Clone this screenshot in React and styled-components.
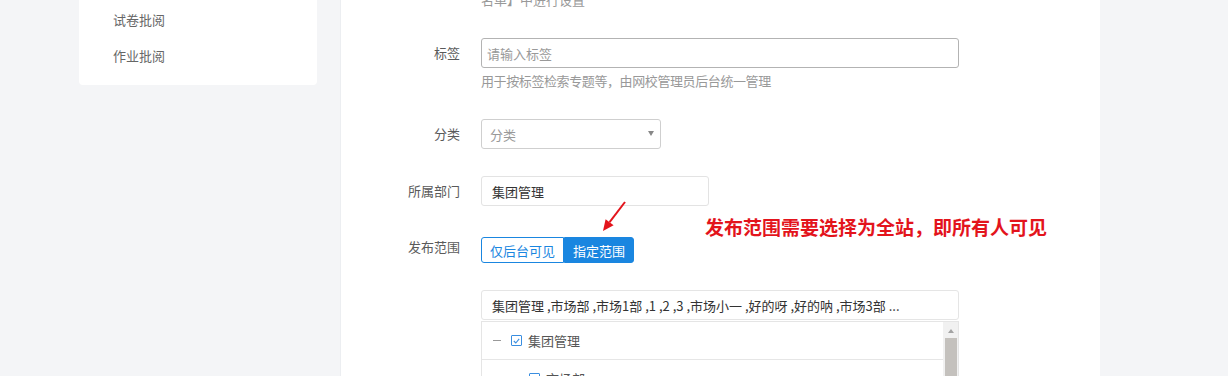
import React from "react";
import styled, { createGlobalStyle } from "styled-components";

const GlobalStyle = createGlobalStyle`
  html, body {
    margin: 0;
    padding: 0;
    background: #f4f5f7;
    overflow: hidden;
    font-family: "Noto Sans CJK SC", "Noto Sans", sans-serif;
  }
  * { box-sizing: border-box; }
`;

const Page = styled.div`
  display: flex;
  align-items: flex-start;
  gap: 23px;
  margin-top: -20px;
  padding-left: 79px;
`;

const Sidebar = styled.nav`
  width: 238px;
  background: #fff;
  border-radius: 4px;
  padding: 22px 0 11px;
`;

const NavItem = styled.div`
  padding-left: 34px;
  line-height: 36px;
  font-size: 13px;
  color: #666;
`;

const Panel = styled.main`
  width: 760px;
  min-height: 520px;
  background: #fff;
  padding-top: 10px;
  border-left: 1px solid #eceef1;
`;

const Row = styled.div`
  display: grid;
  grid-template-columns: 119px 1fr;
  column-gap: 21px;
  align-items: start;
  margin-top: ${(p) => p.$mt || 0}px;
  position: relative;
`;

const Label = styled.div`
  text-align: right;
  font-size: 13px;
  color: #5a5a5a;
  line-height: ${(p) => p.$lh || 30}px;
`;

const Field = styled.div`
  position: relative;
  display: flex;
  flex-direction: column;
  align-items: flex-start;
`;

const Help = styled.div`
  font-size: 13px;
  line-height: 20px;
  color: #999;
  letter-spacing: ${(p) => p.$ls || 0}px;
  margin-top: ${(p) => p.$mt || 0}px;
`;

const TextBox = styled.div`
  width: ${(p) => p.$w}px;
  height: 30px;
  border: 1px solid ${(p) => p.$border || "#e0e0e0"};
  border-radius: 3px;
  padding-left: ${(p) => p.$pl || 10}px;
  display: flex;
  align-items: center;
  font-size: 13px;
  color: ${(p) => (p.$placeholder ? "#999" : "#333")};
  background: #fff;
  position: relative;
  white-space: nowrap;
  overflow: hidden;
`;

const Caret = styled.span`
  position: absolute;
  right: 6px;
  top: 11px;
  width: 0;
  height: 0;
  border-left: 3px solid transparent;
  border-right: 3px solid transparent;
  border-top: 5px solid #888;
`;

const ButtonGroup = styled.div`
  display: flex;
`;

const SegButton = styled.button`
  height: 26px;
  padding: 0 8px;
  font-family: inherit;
  font-size: 13px;
  border: 1px solid #1a86e0;
  background: ${(p) => (p.$active ? "#1a86e0" : "#fff")};
  color: ${(p) => (p.$active ? "#fff" : "#1a86e0")};
  border-radius: ${(p) => (p.$first ? "3px 0 0 3px" : "0 3px 3px 0")};
  cursor: pointer;
`;

const Annotation = styled.div`
  position: absolute;
  left: 224px;
  top: -22px;
  font-size: 19px;
  line-height: 24px;
  font-weight: 700;
  color: #e3141c;
  white-space: nowrap;
`;

const ArrowSvg = styled.svg`
  position: absolute;
  left: 118px;
  top: -36px;
`;

const Dropdown = styled.div`
  width: 478px;
  height: 200px;
  margin-top: 1px;
  border: 1px solid #e5e5e5;
  display: flex;
`;

const TreeList = styled.div`
  flex: 1;
`;

const TreeRow = styled.div`
  height: 38px;
  border-bottom: 1px solid #e6e6e6;
  display: flex;
  align-items: center;
  padding-left: ${(p) => 11 + p.$depth * 18}px;
  font-size: 13px;
  color: #555;
`;

const Toggle = styled.span`
  width: 8px;
  height: 1px;
  background: #999;
  margin-right: 10px;
`;

const Check = styled.span`
  width: 11px;
  height: 11px;
  border: 1px solid #3a8ee0;
  border-radius: 1px;
  margin-right: 6px;
  display: flex;
  align-items: center;
  justify-content: center;
`;

const ScrollTrack = styled.div`
  width: 15px;
  background: #f1f1f1;
  display: flex;
  flex-direction: column;
  align-items: center;
`;

const ScrollArrow = styled.span`
  margin-top: 7px;
  width: 0;
  height: 0;
  border-left: 3px solid transparent;
  border-right: 3px solid transparent;
  border-bottom: 4px solid #a3a3a3;
`;

const ScrollThumb = styled.div`
  margin-top: 5px;
  width: 12px;
  height: 140px;
  background: #c4c1bd;
`;

const CheckMark = () => (
  <svg width="7" height="6" viewBox="0 0 7 6">
    <path d="M0.8 3 L2.8 5 L6.2 0.8" fill="none" stroke="#3a8ee0" strokeWidth="1.1" />
  </svg>
);

export default function App() {
  return (
    <>
      <GlobalStyle />
      <Page>
        <Sidebar>
          <NavItem>试卷批阅</NavItem>
          <NavItem>作业批阅</NavItem>
        </Sidebar>
        <Panel>
          <Row>
            <div />
            <Field>
              <Help>名单】中进行设置</Help>
            </Field>
          </Row>

          <Row $mt={28}>
            <Label>标签</Label>
            <Field>
              <TextBox $w={478} $border="#b3b3b3" $pl={5} $placeholder>
                请输入标签
              </TextBox>
              <Help $mt={3} $ls={-0.4}>用于按标签检索专题等，由网校管理员后台统一管理</Help>
            </Field>
          </Row>

          <Row $mt={28}>
            <Label>分类</Label>
            <Field>
              <TextBox $w={180} $border="#cfcfcf" $pl={8} $placeholder>
                分类
                <Caret />
              </TextBox>
            </Field>
          </Row>

          <Row $mt={27}>
            <Label>所属部门</Label>
            <Field>
              <TextBox $w={228} $border="#e3e3e3">
                集团管理
              </TextBox>
            </Field>
          </Row>

          <Row $mt={31}>
            <Label $lh={20}>发布范围</Label>
            <Field>
              <ButtonGroup>
                <SegButton $first>仅后台可见</SegButton>
                <SegButton $active>指定范围</SegButton>
              </ButtonGroup>
              <ArrowSvg width="32" height="34" viewBox="0 0 32 34">
                <line x1="26" y1="1" x2="10.6" y2="21.2" stroke="#e3141c" strokeWidth="2" />
                <polygon points="4,30 14.6,24.2 6.6,18.2" fill="#e3141c" />
              </ArrowSvg>
              <Annotation>发布范围需要选择为全站，即所有人可见</Annotation>
            </Field>
          </Row>

          <Row $mt={27}>
            <div />
            <Field>
              <TextBox $w={478} $border="#e5e5e5">
                集团管理 ,市场部 ,市场1部 ,1 ,2 ,3 ,市场小一 ,好的呀 ,好的呐 ,市场3部 ...
              </TextBox>
              <Dropdown>
                <TreeList>
                  <TreeRow $depth={0}>
                    <Toggle />
                    <Check>
                      <CheckMark />
                    </Check>
                    集团管理
                  </TreeRow>
                  <TreeRow $depth={1}>
                    <Toggle />
                    <Check>
                      <CheckMark />
                    </Check>
                    市场部
                  </TreeRow>
                </TreeList>
                <ScrollTrack>
                  <ScrollArrow />
                  <ScrollThumb />
                </ScrollTrack>
              </Dropdown>
            </Field>
          </Row>
        </Panel>
      </Page>
    </>
  );
}
